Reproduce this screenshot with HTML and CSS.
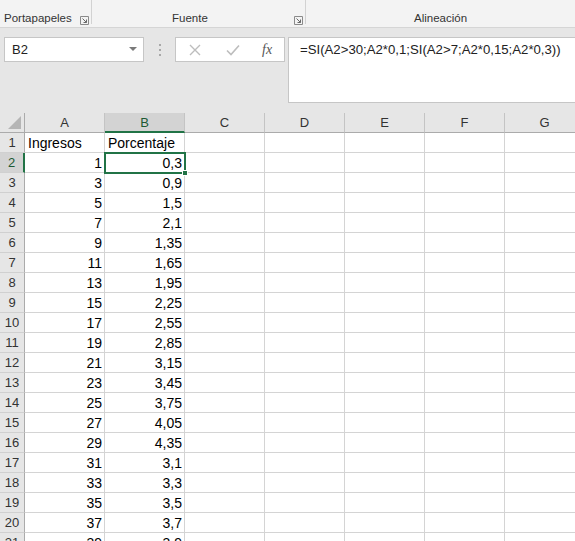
FILE: index.html
```html
<!DOCTYPE html>
<html lang="es">
<head>
<meta charset="utf-8">
<title>Excel</title>
<link rel="stylesheet" href="styles.css">
</head>
<body>
<div class="ribbon">
  <div class="group g1"><span class="glabel">Portapapeles</span><span class="launcher"><svg width="9" height="9" viewBox="0 0 9 9"><path d="M0.5 0.5H8.5V8.5H0.5Z" fill="none" stroke="#8a8a8a"/><path d="M2.5 2.5L6.5 6.5M6.5 3.5V6.5H3.5" fill="none" stroke="#6a6a6a"/></svg></span></div>
  <div class="group g2"><span class="glabel">Fuente</span><span class="launcher"><svg width="9" height="9" viewBox="0 0 9 9"><path d="M0.5 0.5H8.5V8.5H0.5Z" fill="none" stroke="#8a8a8a"/><path d="M2.5 2.5L6.5 6.5M6.5 3.5V6.5H3.5" fill="none" stroke="#6a6a6a"/></svg></span></div>
  <div class="group g3"><span class="glabel">Alineación</span></div>
</div>
<div class="fbar">
  <div class="namebox"><span>B2</span><svg class="dd" width="8" height="4" viewBox="0 0 8 4"><path d="M0 0H8L4 4Z" fill="#7a7a7a"/></svg></div>
  <div class="dots"><i></i><i></i><i></i></div>
  <div class="fbtns">
    <svg width="12" height="12" viewBox="0 0 12 12"><path d="M1 1L11 11M11 1L1 11" stroke="#bdbdbd" stroke-width="1.4" fill="none"/></svg>
    <svg width="14" height="12" viewBox="0 0 14 12"><path d="M1 6.5L5 10.5L13 1.5" stroke="#bdbdbd" stroke-width="1.6" fill="none"/></svg>
    <span class="fx">fx</span>
  </div>
  <div class="finput">=SI(A2&gt;30;A2*0,1;SI(A2&gt;7;A2*0,15;A2*0,3))</div>
</div>
<div class="sheet">
  <div class="grid">
    <div class="corner"><svg width="14" height="14" viewBox="0 0 14 14"><path d="M13 0V13H0Z" fill="#b5b5b5"/></svg></div>
    <div class="ch">A</div><div class="ch sel">B</div><div class="ch">C</div><div class="ch">D</div><div class="ch">E</div><div class="ch">F</div><div class="ch">G</div>

    <div class="rh">1</div><div class="c">Ingresos</div><div class="c">Porcentaje</div><div class="c"></div><div class="c"></div><div class="c"></div><div class="c"></div><div class="c"></div>
    <div class="rh sel">2</div><div class="c num">1</div><div class="c num active">0,3<span class="handle"></span></div><div class="c"></div><div class="c"></div><div class="c"></div><div class="c"></div><div class="c"></div>
    <div class="rh">3</div><div class="c num">3</div><div class="c num">0,9</div><div class="c"></div><div class="c"></div><div class="c"></div><div class="c"></div><div class="c"></div>
    <div class="rh">4</div><div class="c num">5</div><div class="c num">1,5</div><div class="c"></div><div class="c"></div><div class="c"></div><div class="c"></div><div class="c"></div>
    <div class="rh">5</div><div class="c num">7</div><div class="c num">2,1</div><div class="c"></div><div class="c"></div><div class="c"></div><div class="c"></div><div class="c"></div>
    <div class="rh">6</div><div class="c num">9</div><div class="c num">1,35</div><div class="c"></div><div class="c"></div><div class="c"></div><div class="c"></div><div class="c"></div>
    <div class="rh">7</div><div class="c num">11</div><div class="c num">1,65</div><div class="c"></div><div class="c"></div><div class="c"></div><div class="c"></div><div class="c"></div>
    <div class="rh">8</div><div class="c num">13</div><div class="c num">1,95</div><div class="c"></div><div class="c"></div><div class="c"></div><div class="c"></div><div class="c"></div>
    <div class="rh">9</div><div class="c num">15</div><div class="c num">2,25</div><div class="c"></div><div class="c"></div><div class="c"></div><div class="c"></div><div class="c"></div>
    <div class="rh">10</div><div class="c num">17</div><div class="c num">2,55</div><div class="c"></div><div class="c"></div><div class="c"></div><div class="c"></div><div class="c"></div>
    <div class="rh">11</div><div class="c num">19</div><div class="c num">2,85</div><div class="c"></div><div class="c"></div><div class="c"></div><div class="c"></div><div class="c"></div>
    <div class="rh">12</div><div class="c num">21</div><div class="c num">3,15</div><div class="c"></div><div class="c"></div><div class="c"></div><div class="c"></div><div class="c"></div>
    <div class="rh">13</div><div class="c num">23</div><div class="c num">3,45</div><div class="c"></div><div class="c"></div><div class="c"></div><div class="c"></div><div class="c"></div>
    <div class="rh">14</div><div class="c num">25</div><div class="c num">3,75</div><div class="c"></div><div class="c"></div><div class="c"></div><div class="c"></div><div class="c"></div>
    <div class="rh">15</div><div class="c num">27</div><div class="c num">4,05</div><div class="c"></div><div class="c"></div><div class="c"></div><div class="c"></div><div class="c"></div>
    <div class="rh">16</div><div class="c num">29</div><div class="c num">4,35</div><div class="c"></div><div class="c"></div><div class="c"></div><div class="c"></div><div class="c"></div>
    <div class="rh">17</div><div class="c num">31</div><div class="c num">3,1</div><div class="c"></div><div class="c"></div><div class="c"></div><div class="c"></div><div class="c"></div>
    <div class="rh">18</div><div class="c num">33</div><div class="c num">3,3</div><div class="c"></div><div class="c"></div><div class="c"></div><div class="c"></div><div class="c"></div>
    <div class="rh">19</div><div class="c num">35</div><div class="c num">3,5</div><div class="c"></div><div class="c"></div><div class="c"></div><div class="c"></div><div class="c"></div>
    <div class="rh">20</div><div class="c num">37</div><div class="c num">3,7</div><div class="c"></div><div class="c"></div><div class="c"></div><div class="c"></div><div class="c"></div>
    <div class="rh">21</div><div class="c num">39</div><div class="c num">3,9</div><div class="c"></div><div class="c"></div><div class="c"></div><div class="c"></div><div class="c"></div>
  </div>
</div>
</body>
</html>
```

FILE: styles.css
```css
* { box-sizing: border-box; }
html, body {
  margin: 0;
  padding: 0;
  width: 575px;
  height: 541px;
  overflow: hidden;
  background: #e6e6e6;
  font-family: "Liberation Sans", Arial, sans-serif;
}

.ribbon {
  display: flex;
  align-items: flex-start;
  height: 28px;
  background: #f3f3f3;
  border-bottom: 1px solid #d5d5d5;
}
.group {
  display: flex;
  align-items: flex-start;
  height: 24px;
  border-right: 1px solid #d2d2d2;
  color: #333;
  font-size: 11.5px;
  padding-top: 11px;
}
.g1 { width: 92px; padding-left: 4px; }
.g2 { width: 214px; padding-left: 80px; }
.g3 { flex: 1; padding-left: 108px; border-right: none; }
.glabel { line-height: 14px; white-space: nowrap; }
.launcher { margin-left: auto; margin-right: 2px; margin-top: 5px; height: 9px; display: flex; }

.fbar {
  display: flex;
  align-items: flex-start;
  padding: 9px 0 0 4px;
  height: 85px;
}
.namebox {
  width: 140px;
  height: 25px;
  background: #fff;
  border: 1px solid #c6c6c6;
  display: flex;
  align-items: center;
  justify-content: space-between;
  padding: 0 6px 0 7px;
  font-size: 13px;
  color: #222;
}
.dd { margin-bottom: 2px; }
.dots {
  width: 31px;
  height: 25px;
  display: flex;
  flex-direction: column;
  align-items: center;
  justify-content: center;
  gap: 3px;
}
.dots i {
  display: block;
  width: 2px;
  height: 2px;
  background: #a8a8a8;
}
.fbtns {
  width: 110px;
  height: 25px;
  background: #fff;
  border: 1px solid #c6c6c6;
  display: flex;
  align-items: center;
  padding-left: 13px;
  gap: 25px;
}
.fx {
  font-family: "Liberation Serif", "Times New Roman", serif;
  font-style: italic;
  font-size: 14px;
  color: #555;
  margin-left: -3px;
}
.finput {
  margin-left: 3px;
  flex: 1;
  height: 66px;
  background: #fff;
  border: 1px solid #c6c6c6;
  border-right: none;
  padding: 4px 0 0 11px;
  font-size: 13.2px;
  color: #222;
  white-space: nowrap;
}

.sheet {
  width: 575px;
  overflow: hidden;
}
.grid {
  display: grid;
  grid-template-columns: 25px repeat(7, 80px);
  grid-auto-rows: 20px;
  width: 585px;
  background: #fff;
  font-size: 14px;
}
.corner {
  background: #e6e6e6;
  border-right: 1px solid #ababab;
  border-bottom: 1px solid #ababab;
  display: flex;
  align-items: flex-end;
  justify-content: flex-end;
  padding: 0 2px 2px 0;
}
.ch {
  background: #e6e6e6;
  border-right: 1px solid #c4c4c4;
  border-bottom: 1px solid #ababab;
  text-align: center;
  font-size: 13px;
  line-height: 20px;
  color: #333;
}
.ch.sel {
  background: #d3d3d3;
  border-bottom: 2px solid #217346;
  color: #1d5a34;
}
.rh {
  background: #e6e6e6;
  border-right: 1px solid #ababab;
  border-bottom: 1px solid #d0d0d0;
  text-align: center;
  font-size: 13px;
  line-height: 20px;
  color: #333;
}
.rh.sel {
  background: #d3d3d3;
  border-right: 2px solid #217346;
  color: #1d5a34;
}
.c {
  border-right: 1px solid #d4d4d4;
  border-bottom: 1px solid #d4d4d4;
  padding: 0 2px 0 3px;
  line-height: 20px;
  color: #000;
  white-space: nowrap;
}
.num { text-align: right; padding-right: 2px; }
.active {
  position: relative;
  outline: 2px solid #217346;
  outline-offset: -1px;
}
.handle {
  position: absolute;
  right: -4px;
  bottom: -4px;
  width: 6px;
  height: 6px;
  background: #217346;
  border: 1px solid #fff;
}
```
